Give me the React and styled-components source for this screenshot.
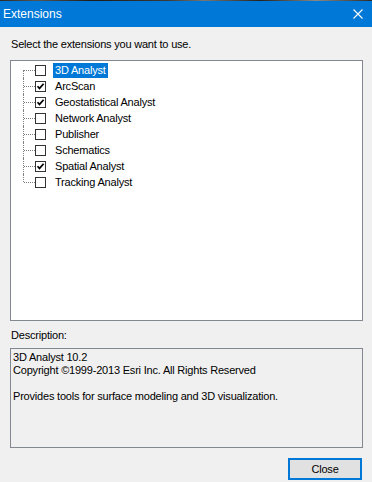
import React from "react";
import styled, { createGlobalStyle } from "styled-components";

const Global = createGlobalStyle`
  html, body { margin: 0; padding: 0; background: #f0f0f0; }
  body { font-family: "Liberation Sans", Arial, sans-serif; font-size: 11px; color: #000; }
`;

const Window = styled.div`
  width: 372px;
  height: 482px;
  background: #f0f0f0;
  display: flex;
  flex-direction: column;
  overflow: hidden;
`;

const TopEdge = styled.div`
  height: 1px;
  background: linear-gradient(90deg, #2a2a2a 0%, #555 10%, #1b1b1b 25%, #3a3a3a 45%, #777 55%, #222 70%, #888 85%, #2b2b2b 100%);
`;

const TitleBar = styled.div`
  height: 26px;
  background: #0078d7;
  display: flex;
  align-items: center;
  justify-content: space-between;
  padding: 0 9px 0 3px;
  color: #fff;
  font-size: 12px;
`;

const Title = styled.span`
  line-height: 14px;
  margin-top: -1px;
`;

const CloseX = styled.svg`
  width: 10px;
  height: 10px;
  display: block;
`;

const Body = styled.div`
  flex: 1;
  display: flex;
  flex-direction: column;
  padding: 0 9px 0 10px;
  letter-spacing: -0.2px;
`;

const Label = styled.div`
  line-height: 13px;
  margin-top: ${(p) => p.$top}px;
  padding-left: 1px;
`;

const ListBox = styled.div`
  margin-top: 9px;
  height: 258px;
  border: 1px solid #828790;
  background: #fff;
  padding-top: 1px;
`;

const Row = styled.div`
  display: flex;
  align-items: center;
  height: 16px;
`;

const Connector = styled.span`
  position: relative;
  width: 12px;
  height: 16px;
  margin-left: 12px;
  flex: none;
  &::before {
    content: "";
    position: absolute;
    left: 0;
    top: ${(p) => (p.$first ? "8px" : "0")};
    height: ${(p) => (p.$first || p.$last ? "8px" : "16px")};
    border-left: 1px dotted #808080;
  }
  &::after {
    content: "";
    position: absolute;
    left: 1px;
    right: 0;
    top: 8px;
    border-top: 1px dotted #808080;
  }
`;

const Box = styled.span`
  width: 11px;
  height: 11px;
  box-sizing: border-box;
  border: 1px solid #333;
  background: #fff;
  flex: none;
  display: flex;
  align-items: center;
  justify-content: center;
`;

const ItemText = styled.span`
  margin-left: 7px;
  padding: 0 2px;
  height: 15px;
  line-height: 15px;
  background: ${(p) => (p.$selected ? "#0078d7" : "transparent")};
  color: ${(p) => (p.$selected ? "#fff" : "#000")};
  white-space: nowrap;
`;

const DescBox = styled.div`
  margin-top: 6px;
  height: 96px;
  border: 1px solid #828790;
  background: #f0f0f0;
  padding: 2px 2px 0;
  line-height: 13px;
`;

const Footer = styled.div`
  display: flex;
  justify-content: flex-end;
  margin-top: 10px;
  padding-right: 1px;
`;

const Button = styled.button`
  width: 74px;
  height: 22px;
  box-sizing: border-box;
  border: 2px solid #0078d7;
  background: #e1e1e1;
  font-family: "Liberation Sans", Arial, sans-serif;
  font-size: 11px;
  letter-spacing: -0.2px;
  color: #000;
  padding: 0;
  margin: 0;
`;

const items = [
  { name: "3D Analyst", checked: false, selected: true },
  { name: "ArcScan", checked: true },
  { name: "Geostatistical Analyst", checked: true },
  { name: "Network Analyst", checked: false },
  { name: "Publisher", checked: false },
  { name: "Schematics", checked: false },
  { name: "Spatial Analyst", checked: true },
  { name: "Tracking Analyst", checked: false },
];

function Check() {
  return (
    <svg width="9" height="9" viewBox="0 0 9 9">
      <path d="M1.5 4.2 L3.5 6.4 L7.6 1.8" fill="none" stroke="#000" strokeWidth="1.7" />
    </svg>
  );
}

export default function App() {
  return (
    <Window>
      <Global />
      <TopEdge />
      <TitleBar>
        <Title>Extensions</Title>
        <CloseX viewBox="0 0 10 10">
          <path d="M0.5 0.5 L9.5 9.5 M9.5 0.5 L0.5 9.5" stroke="#fff" strokeWidth="1.1" />
        </CloseX>
      </TitleBar>
      <Body>
        <Label $top={11}>Select the extensions you want to use.</Label>
        <ListBox>
          {items.map((it, i) => (
            <Row key={it.name}>
              <Connector $first={i === 0} $last={i === items.length - 1} />
              <Box>{it.checked && <Check />}</Box>
              <ItemText $selected={it.selected}>{it.name}</ItemText>
            </Row>
          ))}
        </ListBox>
        <Label $top={8}>Description:</Label>
        <DescBox>
          <div>3D Analyst 10.2</div>
          <div>Copyright ©1999-2013 Esri Inc. All Rights Reserved</div>
          <div>&nbsp;</div>
          <div>Provides tools for surface modeling and 3D visualization.</div>
        </DescBox>
        <Footer>
          <Button>Close</Button>
        </Footer>
      </Body>
    </Window>
  );
}
